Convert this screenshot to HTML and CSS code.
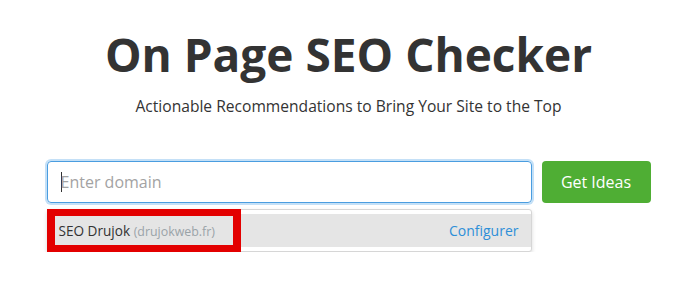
FILE: index.html
```html
<!DOCTYPE html>
<html lang="en">
<head>
    <meta charset="UTF-8">
    <meta name="viewport" content="width=device-width, initial-scale=1.0">
    <title>On Page SEO Checker</title>
    <link rel="stylesheet" href="styles.css">
</head>
<body>

<div class="hero">
    <h1 class="title">On Page SEO Checker</h1>
    <p class="subtitle">Actionable Recommendations to Bring Your Site to the Top</p>

    <div class="search">
        <div class="field">
            <div class="domain"><span class="caret"></span>Enter domain</div>
            <div class="dropdown">
                <div class="item">
                    <span class="project">SEO Drujok <span class="site">(drujokweb.fr)</span></span>
                    <span class="config">Configurer</span>
                </div>
                <div class="highlight"></div>
            </div>
        </div>
        <div class="go">Get Ideas</div>
    </div>
</div>

</body>
</html>
```

FILE: styles.css
```css
body {
    font-family: 'Open Sans', 'Noto Sans', sans-serif;
    margin: 0;
    background: #fff;
    color: #333;
}

.hero {
    display: flex;
    flex-direction: column;
    align-items: center;
    padding-top: 22px;
}

.title {
    font-size: 46px;
    font-weight: 700;
    line-height: 64px;
    margin: 0;
    color: #333;
}

.subtitle {
    font-size: 15.6px;
    line-height: 20px;
    margin: 10px 0 0;
    color: #333;
}

.search {
    display: flex;
    align-items: flex-start;
    gap: 10px;
    margin-top: 45px;
}

.field {
    display: flex;
    flex-direction: column;
    gap: 6px;
    width: 485px;
}

.domain {
    display: flex;
    align-items: center;
    box-sizing: border-box;
    height: 42px;
    padding: 0 13px;
    font-size: 16px;
    color: #a3a3a3;
    border: 1px solid #4a9de0;
    border-radius: 4px;
    box-shadow: 0 0 0 2px #c4e0f7;
}

.caret {
    width: 1px;
    height: 20px;
    margin-right: -1px;
    background: #333;
}

.dropdown {
    position: relative;
    background: #fff;
    border: 1px solid #d6d6d6;
    border-radius: 3px;
    box-shadow: 0 2px 4px rgba(0, 0, 0, 0.15);
    padding: 4px 0;
}

.item {
    display: flex;
    justify-content: space-between;
    align-items: center;
    height: 33px;
    padding: 0 12px 0 11px;
    background: #e5e5e5;
    font-size: 13.6px;
}

.site {
    color: #9aa3a8;
    font-size: 12.4px;
}

.config {
    color: #2d8fd8;
    font-size: 14px;
}

.highlight {
    position: absolute;
    left: -1px;
    top: -1px;
    width: 194px;
    height: 43px;
    box-sizing: border-box;
    border: 7px solid #e30000;
    border-left-width: 8px;
    border-right-width: 8px;
}

.go {
    display: flex;
    align-items: center;
    justify-content: center;
    width: 109px;
    height: 42px;
    border-radius: 4px;
    background: #4fae34;
    color: #fff;
    font-size: 16px;
}
```
